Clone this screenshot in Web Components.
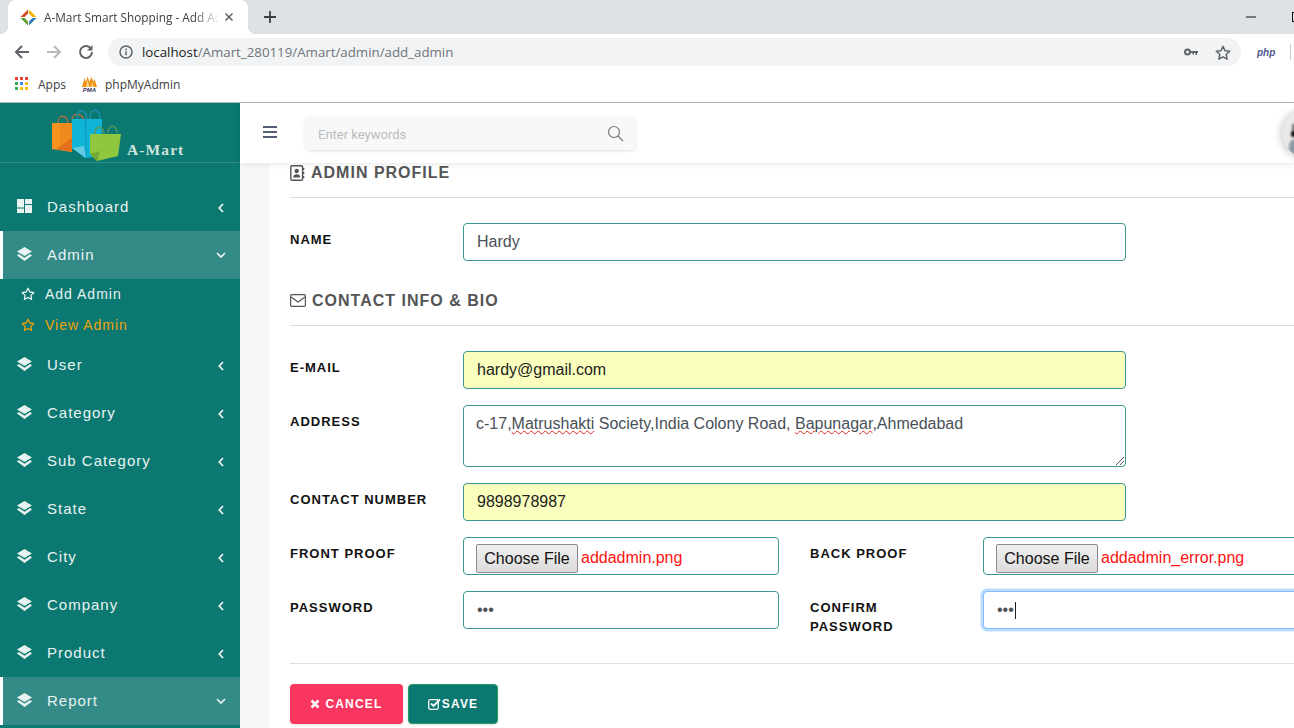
<!DOCTYPE html>
<html lang="en"><head><meta charset="utf-8"><title>A-Mart Smart Shopping - Add Admin</title>
<style>
html,body{margin:0;padding:0;width:1294px;height:728px;overflow:hidden;background:#fff;font-family:"Liberation Sans",Arial,sans-serif}
app-shell{width:1294px;height:728px}
</style></head><body>
<app-shell>
  <browser-chrome slot="chrome"></browser-chrome>
  <side-bar slot="side">
    <nav-item label="Dashboard" icon="dash"></nav-item>
    <nav-item label="Admin" open></nav-item>
    <sub-item label="Add Admin"></sub-item>
    <sub-item label="View Admin" current></sub-item>
    <nav-item label="User"></nav-item>
    <nav-item label="Category"></nav-item>
    <nav-item label="Sub Category"></nav-item>
    <nav-item label="State"></nav-item>
    <nav-item label="City"></nav-item>
    <nav-item label="Company"></nav-item>
    <nav-item label="Product"></nav-item>
    <nav-item label="Report" open></nav-item>
  </side-bar>
  <top-bar slot="top"></top-bar>
  <admin-form slot="main"></admin-form>
</app-shell>
<script>
function el(name, css, html){
  customElements.define(name, class extends HTMLElement{
    connectedCallback(){
      if(this.shadowRoot) return;
      const r=this.attachShadow({mode:'open'});
      r.innerHTML='<style>'+css+'</style>'+(typeof html==='function'?html(this):html);
    }
  });
}
el('app-shell',`:host{display:grid;grid-template-columns:240px 1fr;grid-template-rows:103px 60px 1fr;overflow:hidden}
 .c{grid-column:1/3;display:block}.s{grid-row:2/4}.t{grid-column:2;position:relative;z-index:2}.m{grid-column:2;overflow:hidden;min-width:0}`,
 `<div class="c"><slot name="chrome"></slot></div><div class="s"><slot name="side"></slot></div><div class="t"><slot name="top"></slot></div><div class="m"><slot name="main"></slot></div>`);

el('browser-chrome',`:host{display:block;height:103px;box-sizing:border-box;border-bottom:1px solid #b3b3b3;font-family:"Open Sans","Noto Sans",sans-serif;background:#fff;overflow:hidden}
 .strip{height:34px;background:#dee1e6;display:flex;align-items:stretch;padding-left:8px}
 .tab{width:240px;background:#fff;border-radius:8px 8px 0 0;display:flex;align-items:center;position:relative;box-sizing:border-box;padding-left:12px}
 .tab:before,.tab:after{content:"";position:absolute;bottom:0;width:8px;height:8px}
 .tab:before{left:-8px;background:radial-gradient(circle at 0 0,transparent 8px,#fff 8.5px)}
 .tab:after{right:-8px;background:radial-gradient(circle at 100% 0,transparent 8px,#fff 8.5px)}
 .title{margin-left:7px;width:178px;white-space:nowrap;font-size:11.800px;color:#3c4043;-webkit-mask-image:linear-gradient(90deg,#000 150px,transparent 176px);mask-image:linear-gradient(90deg,#000 150px,transparent 176px)}
 .x{margin-left:2px;width:10px;height:10px;display:block}
 .plus{align-self:center;display:block;margin-left:16px}
 .win{margin-left:auto;display:flex;align-items:center;gap:36px;margin-right:-8px}
 .tool{height:36px;display:flex;align-items:center;padding-left:14px;box-sizing:border-box}
 .tb{width:16px;height:16px;margin-right:16px;display:block;flex:none}
 .omni{margin-left:-2px;width:1133px;height:28px;border-radius:14px;background:#f1f3f4;display:flex;align-items:center;padding-left:11px;box-sizing:border-box}
 .url{margin-left:9px;font-size:13.300px;color:#70757a;white-space:nowrap}.url b{font-weight:400;color:#202124}
 .right{margin-left:auto;display:flex;align-items:center;padding-right:10px}
 .php{margin-left:16px;font:italic 700 10px "Liberation Sans",sans-serif;color:#4f5b93}
 .div{width:1px;height:16px;background:#ccc;margin-left:15px}
 .marks{height:28px;display:flex;align-items:center;padding-left:15px;font-size:12px;color:#3c4043}
 .marks span{display:block}
 .pma{position:relative;width:17px;height:16px;margin-left:15px;margin-right:7px}
 .pma i{position:absolute;left:0;right:0;bottom:-1px;text-align:center;font:italic 700 6px "Liberation Sans",sans-serif;color:#3b3560}
 `,`<div class="strip"><div class="tab">
   <svg width="17" height="17" viewBox="0 0 16 16"><path d="M7.500.5v3.800L4.300 7.500H.5z" fill="#d8452c"/><path d="M8.500.5v3.800l3.200 3.200h3.800z" fill="#f4b400"/><path d="M.5 8.500h3.800l3.200 3.200v3.800z" fill="#5a9e32"/><path d="M15.500 8.500h-3.800l-3.200 3.200v3.800z" fill="#2f7fb8"/></svg>
   <div class="title">A-Mart Smart Shopping - Add Ad</div>
   <svg class="x" viewBox="0 0 10 10"><path d="M1.500 1.500l7 7M8.500 1.500l-7 7" stroke="#5f6368" stroke-width="1.600"/></svg>
   </div>
   <svg class="plus" width="12" height="12" viewBox="0 0 12 12"><path d="M6 0v12M0 6h12" stroke="#3c4043" stroke-width="1.800"/></svg>
   <div class="win"><svg width="10" height="2" viewBox="0 0 10 2"><path d="M0 1h10" stroke="#111" stroke-width="1"/></svg><svg width="10" height="10" viewBox="0 0 10 10"><rect x=".5" y=".5" width="9" height="9" fill="none" stroke="#111"/></svg></div>
 </div>
 <div class="tool">
   <svg class="tb" viewBox="0 0 16 16"><path d="M15 8H2.500M8 2 2 8l6 6" fill="none" stroke="#5f6368" stroke-width="2"/></svg>
   <svg class="tb" viewBox="0 0 16 16"><path d="M1 8h12.500M8 2l6 6-6 6" fill="none" stroke="#b8babc" stroke-width="2"/></svg>
   <svg class="tb" viewBox="0 0 16 16"><path d="M13.200 5A6 6 0 1 0 14 8" fill="none" stroke="#5f6368" stroke-width="2"/><path d="M14.500 1v5.500H9z" fill="#5f6368"/></svg>
   <div class="omni">
     <svg width="14" height="14" viewBox="0 0 14 14"><circle cx="7" cy="7" r="6" fill="none" stroke="#5f6368" stroke-width="1.500"/><path d="M7 6.200v4M7 3.600v1.600" stroke="#5f6368" stroke-width="1.500"/></svg>
     <div class="url"><b>localhost</b>/Amart_280119/Amart/admin/add_admin</div>
     <div class="right">
       <svg width="14" height="8" viewBox="0 0 14 8" style="margin-right:17px"><circle cx="3.500" cy="4" r="2.500" fill="none" stroke="#5f6368" stroke-width="2"/><path d="M6 3h8v2h-1v2h-1.500V5H10v1.500H8.500V5H6z" fill="#5f6368"/></svg>
       <svg width="16" height="15" viewBox="0 0 16 15"><path d="M8 1.400l2 4.300 4.700.6-3.500 3.200.9 4.600L8 11.800 3.900 14.100l.9-4.600L1.300 6.300 6 5.700z" fill="none" stroke="#5f6368" stroke-width="1.500" stroke-linejoin="round"/></svg>
     </div>
   </div>
   <span class="php">php</span><div class="div"></div>
 </div>
 <div class="marks">
   <svg width="14" height="14" viewBox="0 0 14 14" style="margin-right:9px"><rect width="3" height="3" fill="#ea4335"/><rect x="5" width="3" height="3" fill="#ea4335"/><rect x="10" width="3" height="3" fill="#ea4335"/><rect y="5" width="3" height="3" fill="#34a853"/><rect x="5" y="5" width="3" height="3" fill="#4285f4"/><rect x="10" y="5" width="3" height="3" fill="#fbbc05"/><rect y="10" width="3" height="3" fill="#34a853"/><rect x="5" y="10" width="3" height="3" fill="#fbbc05"/><rect x="10" y="10" width="3" height="3" fill="#fbbc05"/></svg>
   <span>Apps</span>
   <div class="pma"><svg width="17" height="11" viewBox="0 0 17 11" style="display:block"><path d="M1 11 3.500 2 5 6 6.500 .5 8.500 6 10.500 1 12.500 6 13.500 3 16 11z" fill="#f29111"/><path d="M5 11 6.500 4 8.500 11zM10 11l1.500-5 1.500 5z" fill="#fbd38a"/></svg><i>PMA</i></div>
   <span>phpMyAdmin</span>
 </div>`);

el('side-bar',`:host{display:block;background:#0b7871;height:100%;overflow:hidden}
 .logo{height:59px;border-bottom:1px solid #338a86;display:flex;align-items:flex-start;padding-left:52px;position:relative}
 .logo svg{display:block;margin-top:5px}
 .logo span{font:700 15.500px "Liberation Serif",serif;letter-spacing:1.100px;color:#cfe5df;margin:38px 0 0 5px}
 nav{padding-top:20px;display:block}`,
 `<div class="logo"><svg width="70" height="54" viewBox="0 0 70 54">
   <path d="M6 15c0-9 9-9 10 0" fill="none" stroke="#a9713f" stroke-width="1.300"/>
   <path d="M20 13c0-9 10-9 12 0" fill="none" stroke="#a9713f" stroke-width="1.300"/>
   <path d="M25 11c0-11 9-11 10 0M38 11c0-12 10-12 10 0" fill="none" stroke="#1a90ad" stroke-width="1.400"/>
   <path d="M0 15H20V44L0 41z" fill="#f7931e"/><path d="M8 15h12v29l-12-3z" fill="#f08a1c"/><path d="M4 41 20 30v14z" fill="#e2701a"/>
   <path d="M20 11H50V48L33 50 20 40z" fill="#10b4d6"/><path d="M20 40l12-2 2 12z" fill="#63cbe2"/><path d="M32 11h3v39h-1z" fill="#0ca5c6"/>
   <path d="M43 26c0-9 8-9 9 0M56 25c0-9 9-9 9 0" fill="none" stroke="#5b9a5a" stroke-width="1.400"/>
   <path d="M38 26H69L66 48 45 53 38 46z" fill="#8fc73e"/><path d="M38 46l10-3-3 10z" fill="#73a832"/>
 </svg><span>A-Mart</span></div><nav><slot></slot></nav>`);

const layers=`<svg width="15" height="14" viewBox="0 0 15 14"><path d="M7.500 0 15 4.500 7.500 9 0 4.500z" fill="#e9f3f1"/><path d="M1.800 7 0 8.500 7.500 14 15 8.500 13.200 7 7.500 10.800z" fill="#e9f3f1"/></svg>`;
const dash=`<svg width="15" height="14" viewBox="0 0 15 14"><g fill="#e9f3f1"><rect width="7" height="8.500"/><rect x="8" width="7" height="5"/><rect y="9.500" width="7" height="4.500"/><rect x="8" y="6" width="7" height="8"/></g></svg>`;
el('nav-item',`:host{display:block;height:48px}
 .r{height:48px;display:flex;align-items:center;box-sizing:border-box;padding-left:17px;color:#e9f3f1;font-size:15px;letter-spacing:1px;position:relative}
 .r.o{background:#338a86;border-left:3px solid #fff;padding-left:14px}
 svg{display:block;flex:none}.i{margin-top:-3px;margin-right:15px;width:15px}
 .ch{margin-left:auto}
 .l{display:block;margin-top:-1px}`,
 h=>{const o=h.hasAttribute('open');const ic=h.getAttribute('icon')==='dash'?dash:layers;
 return `<div class="r ${o?'o':''}"><div class="i">${ic}</div><span class="l">${h.getAttribute('label')}</span>`+
 (o?`<svg class="ch" width="10" height="6" viewBox="0 0 10 6" style="margin-right:14px"><path d="M1 1l4 4 4-4" fill="none" stroke="#e9f3f1" stroke-width="1.700"/></svg>`
   :`<svg class="ch" width="6" height="10" viewBox="0 0 6 10" style="margin-right:16px;margin-top:1px"><path d="M5 1 1.300 5 5 9" fill="none" stroke="#e9f3f1" stroke-width="1.800"/></svg>`)+`</div>`});

el('sub-item',`:host{display:block;height:31px}
 .r{height:29px;padding-bottom:2px;display:flex;align-items:center;padding-left:21px;font-size:14px;letter-spacing:1px;color:#e9f3f1}
 .r.c{color:#f0a30a}svg{display:block;margin-right:10px;margin-top:1px}`,
 h=>{const c=h.hasAttribute('current');const col=c?'#f0a30a':'#e9f3f1';
 return `<div class="r ${c?'c':''}"><svg width="14" height="14" viewBox="0 0 14 14"><path d="M7 1.300l1.800 3.700 4 .6-2.900 2.800.7 4L7 10.500l-3.600 1.900.7-4L1.200 5.600l4-.6z" fill="none" stroke="${col}" stroke-width="1.300" stroke-linejoin="round"/></svg><span>${h.getAttribute('label')}</span></div>`});

el('top-bar',`:host{display:block;height:60px;background:#fff;box-shadow:0 2px 6px rgba(0,0,0,.08)}
 .w{height:60px;display:flex;align-items:center;padding-left:23px;position:relative}
 .b{display:block;margin-top:-2px}
 .s{margin-left:28px;width:331px;height:34px;box-sizing:border-box;background:#f8f8f8;border-radius:5px;box-shadow:0 1px 3px rgba(0,0,0,.12);display:flex;align-items:center;padding:2px 12px 0 13px;font-size:13px;font-family:"Roboto","Liberation Sans",sans-serif;color:#b9bcc0}
 .s svg{margin-left:auto;margin-top:-2px}
 .a{margin-left:auto;margin-right:-36px;width:48px;height:48px;border-radius:50%;background:#e9e9e9;box-shadow:0 1px 8px rgba(0,0,0,.28);overflow:hidden;flex:none}
 .a svg{display:block;filter:blur(.8px)}`,
 `<div class="w"><svg class="b" width="14" height="12" viewBox="0 0 14 12"><path d="M0 1h14M0 6h14M0 11h14" stroke="#1c2b4a" stroke-width="1.600"/></svg>
  <div class="s"><span>Enter keywords</span><svg width="17" height="17" viewBox="0 0 17 17"><circle cx="7" cy="7" r="5.500" fill="none" stroke="#777" stroke-width="1.200"/><path d="M11 11l5 5" stroke="#777" stroke-width="1.300"/></svg></div>
  <div class="a"><svg width="48" height="48" viewBox="0 0 48 48"><rect x="10" y="15" width="5" height="7" fill="#777"/><rect x="9" y="22" width="6" height="6" rx="2" fill="#111"/><path d="M7 38c0-6 3-8 8-8v18H7z" fill="#8b9aa6"/></svg></div></div>`);

el('section-head',`:host{display:block;border-bottom:1px solid #dcdcdc;padding-bottom:16px;margin-bottom:25px}
 .h{height:18px;box-sizing:border-box;padding-top:1px;display:flex;align-items:center;font-size:16px;font-weight:700;letter-spacing:1px;color:#555;line-height:17px}
 ::slotted(svg){display:block;margin-right:6px;flex:none}`,`<div class="h"><slot></slot></div>`);

el('form-row',`:host{display:flex;align-items:flex-start;margin-bottom:16px}`,`<slot></slot>`);
el('field-label',`:host{display:block;width:173px;flex:none;box-sizing:border-box;padding:7px 30px 0 0;font-size:13px;line-height:19px;font-weight:700;letter-spacing:1px;color:#111}`,`<slot></slot>`);
el('text-box',`:host{display:flex;align-items:center;box-sizing:border-box;flex:none;width:var(--w,663px);height:38px;border:1px solid #3a9a90;border-radius:4px;padding:0 12px 0 13px;font-size:16px;color:#495057;background:#fff;white-space:nowrap;overflow:visible;position:relative}
 :host([fill]){background:#faffbd;color:#222}
 :host([focus]){border-color:#80bdff;box-shadow:0 0 0 2.500px #bcdcff}
 :host([area]){height:62px;align-items:flex-start;padding-top:6px;padding-left:12px;line-height:24px}
 :host([file]){padding-left:12px}
 .h{position:absolute;right:1px;bottom:1px;display:none}:host([area]) .h{display:block}`,
 `<slot></slot><svg class="h" width="9" height="9" viewBox="0 0 9 9"><path d="M1 9l8-8M5 9l4-4" stroke="#555" stroke-width="1"/></svg>`);
el('choose-file',`:host{display:inline-flex;align-items:center}
 .b{box-sizing:border-box;height:29px;width:102px;text-align:center;margin-top:5px;border:1px solid #8a8a8a;border-radius:2px;background:linear-gradient(#f0f0f0,#dcdcdc);color:#111;font-size:16px;line-height:27px}
 .n{margin-left:3px;margin-top:4px;color:#f11;font-size:16px}`,
 h=>`<div class="b">Choose File</div><span class="n">${h.getAttribute('name')}</span>`);
el('action-button',`:host{display:flex;align-items:center;justify-content:center;box-sizing:border-box;height:40px;border-radius:4px;font-size:12px;font-weight:700;letter-spacing:1.200px;color:#fff;box-shadow:0 1px 3px rgba(0,0,0,.12)}
 :host([kind=cancel]){background:#f9365f;width:113px}
 :host([kind=save]){background:#0b7871;border:1px solid #21a05c;width:90px}`,`<slot></slot>`);

el('admin-form',`:host{display:block;height:100%;background:#f7f8f9;padding-left:30px;box-sizing:border-box;overflow:hidden}
 .card{width:1180px;height:100%;background:#fff;padding-left:20px;box-sizing:border-box}
 .gap{width:31px;flex:none}
 .half{--w:316px}
 .hr{height:1px;background:#dbe0e6;margin-top:34px;margin-bottom:20px}
 .btns{display:flex;gap:5px}
 .w{text-decoration:underline wavy #e0281e;text-decoration-thickness:1px;text-underline-offset:1px}
 .caret{display:inline-block;width:1px;height:17px;background:#222;vertical-align:middle;margin-left:1px}
 .row2{margin-bottom:0;height:38px}`,
 `<div class="card">
  <section-head><svg width="15" height="16" viewBox="0 0 15 16"><rect x=".8" y=".8" width="11.800" height="14.400" rx="1.300" fill="none" stroke="#555" stroke-width="1.400"/><path d="M13.500 3v2M13.500 7v2M13.500 11v2" stroke="#555" stroke-width="1.600"/><circle cx="6.700" cy="6" r="2.200" fill="#555"/><path d="M3 12.500c0-4.500 7.400-4.500 7.400 0z" fill="#555"/></svg>ADMIN PROFILE</section-head>
  <form-row><field-label>NAME</field-label><text-box>Hardy</text-box></form-row>
  <section-head style="margin-top:30px"><svg width="16" height="13" viewBox="0 0 16 13"><rect x=".6" y=".6" width="14.800" height="11.800" rx="1.200" fill="none" stroke="#555" stroke-width="1.200"/><path d="M1 3l7 5 7-5" fill="none" stroke="#555" stroke-width="1.200"/></svg>CONTACT INFO &amp; BIO</section-head>
  <form-row><field-label>E-MAIL</field-label><text-box fill>hardy@gmail.com</text-box></form-row>
  <form-row><field-label>ADDRESS</field-label><text-box area><span>c-17,<span class="w">Matrushakti</span> Society,India Colony Road, <span class="w">Bapunagar</span>,Ahmedabad</span></text-box></form-row>
  <form-row><field-label>CONTACT NUMBER</field-label><text-box fill>9898978987</text-box></form-row>
  <form-row><field-label>FRONT PROOF</field-label><text-box class="half" file><choose-file name="addadmin.png"></choose-file></text-box><div class="gap"></div><field-label>BACK PROOF</field-label><text-box class="half" file><choose-file name="addadmin_error.png"></choose-file></text-box></form-row>
  <form-row class="row2"><field-label>PASSWORD</field-label><text-box class="half">•••</text-box><div class="gap"></div><field-label>CONFIRM PASSWORD</field-label><text-box class="half" focus>•••<span class="caret"></span></text-box></form-row>
  <div class="hr"></div>
  <div class="btns"><action-button kind="cancel"><svg width="10" height="10" viewBox="0 0 10 10" style="margin-right:5px"><path d="M1.500 1.500l7 7M8.500 1.500l-7 7" stroke="#fff" stroke-width="2.600"/></svg>CANCEL</action-button><action-button kind="save"><svg width="13" height="12" viewBox="0 0 13 12" style="margin-right:1px"><rect x=".7" y="1.700" width="9.600" height="9.600" rx="1.500" fill="none" stroke="#fff" stroke-width="1.300"/><path d="M3 5.500l2.500 2.500L12 1.500" fill="none" stroke="#fff" stroke-width="1.900"/></svg>SAVE</action-button></div>
 </div>`);
</script>
</body></html>
